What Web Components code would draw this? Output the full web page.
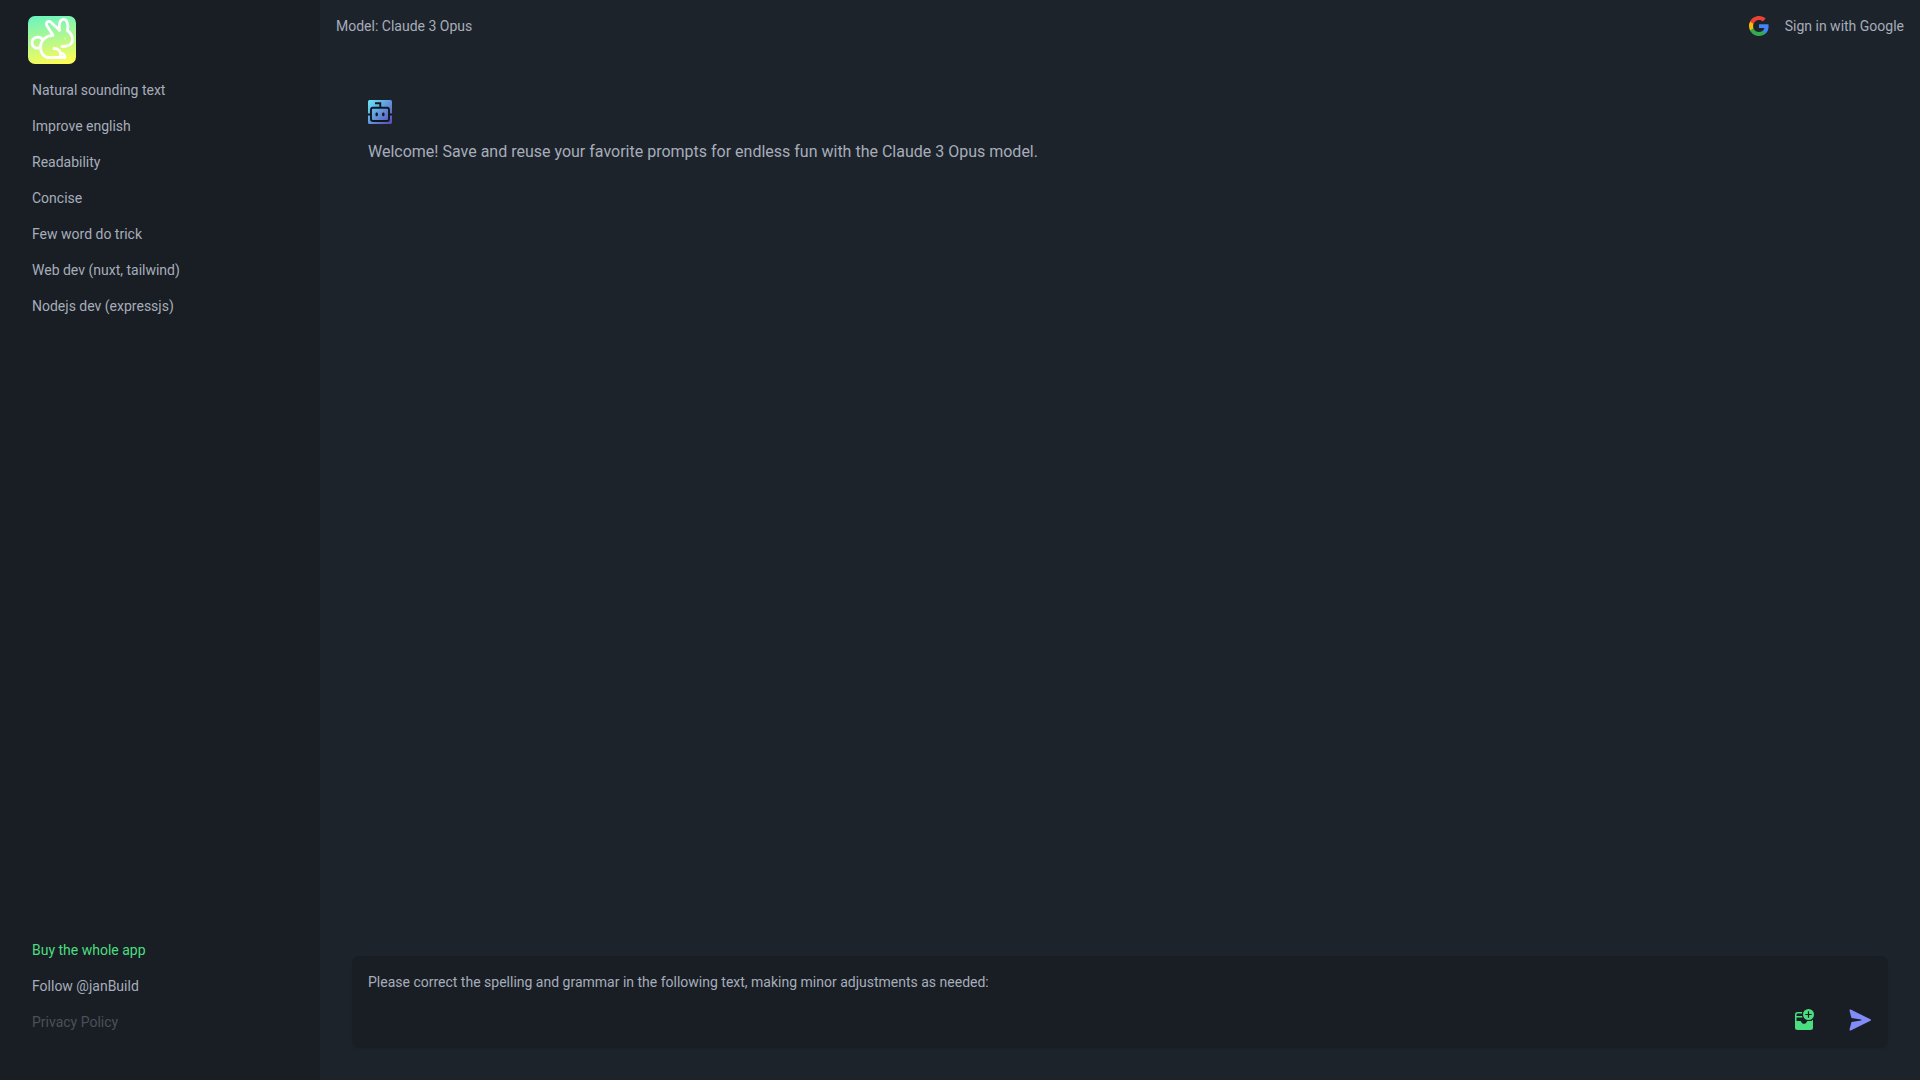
<!DOCTYPE html>
<html lang="en">
<head>
<meta charset="utf-8">
<meta name="viewport" content="width=device-width, initial-scale=1">
<title>Claude 3 Opus prompts</title>
<style>
  :root {
    --base-100: #1d232a;
    --base-200: #191e24;
    --content: #a6adbb;
    --muted: #4b5058;
    --green: #4ade80;
    --indigo: #818cf8;
  }
  body {
    margin: 0;
    background: var(--base-100);
    color: var(--content);
    font: 14px/20px Roboto, "Liberation Sans", sans-serif;
  }
</style>
</head>
<body>
<prompt-app>
  <side-bar slot="sidebar">
    <menu-item>Natural sounding text</menu-item>
    <menu-item>Improve english</menu-item>
    <menu-item>Readability</menu-item>
    <menu-item>Concise</menu-item>
    <menu-item>Few word do trick</menu-item>
    <menu-item>Web dev (nuxt, tailwind)</menu-item>
    <menu-item>Nodejs dev (expressjs)</menu-item>
    <menu-item slot="footer" href="#buy" tone="accent">Buy the whole app</menu-item>
    <menu-item slot="footer" href="#follow">Follow @janBuild</menu-item>
    <menu-item slot="footer" href="#privacy" tone="muted">Privacy Policy</menu-item>
  </side-bar>
  <top-bar>Model: Claude 3 Opus</top-bar>
  <chat-message>Welcome! Save and reuse your favorite prompts for endless fun with the Claude 3 Opus model.</chat-message>
  <prompt-box slot="composer" value="Please correct the spelling and grammar in the following text, making minor adjustments as needed:"></prompt-box>
</prompt-app>

<script>
class PromptApp extends HTMLElement {
  constructor() {
    super();
    this.attachShadow({ mode: "open" });
  }

  connectedCallback() {
    this.shadowRoot.innerHTML = `
      <style>
        :host {
          display: grid;
          grid-template-columns: 320px minmax(0, 1fr);
          min-height: 100vh;
        }
        main {
          display: flex;
          flex-direction: column;
        }
        .messages {
          flex: 1;
        }
        .composer {
          padding: 0 32px 32px;
        }
      </style>
      <slot name="sidebar"></slot>
      <main>
        <div class="messages"><slot></slot></div>
        <div class="composer"><slot name="composer"></slot></div>
      </main>
    `;
  }
}

class SideBar extends HTMLElement {
  constructor() {
    super();
    this.attachShadow({ mode: "open" });
  }

  connectedCallback() {
    this.shadowRoot.innerHTML = `
      <style>
        :host {
          display: flex;
          flex-direction: column;
          justify-content: space-between;
          box-sizing: border-box;
          padding: 16px 16px 40px;
          background: var(--base-200);
        }
        .logo {
          display: block;
          width: 48px;
          height: 48px;
          margin: 0 12px 8px;
        }
        svg {
          display: block;
        }
      </style>
      <nav aria-label="Prompts">
        <a class="logo" href="#home" aria-label="Home">
          <svg width="48" height="48" viewBox="0 0 48 48" fill="none">
            <defs>
              <linearGradient id="sky" x1="20" y1="0" x2="28" y2="48" gradientUnits="userSpaceOnUse">
                <stop stop-color="#70f5bb"/>
                <stop offset=".5" stop-color="#b5f88d"/>
                <stop offset="1" stop-color="#fcfc55"/>
              </linearGradient>
            </defs>
            <rect width="48" height="48" rx="7" fill="url(#sky)"/>
            <g stroke="#fff" stroke-width="2.8" stroke-linecap="round" stroke-linejoin="round">
              <path d="M12.500 31.300C8.500 33.500 4 31 4 26.800c0-5.800 8.200-7.800 10.800-2.600"/>
              <path d="M31.500 14.300 23 6.300c-2.500-2.300-5.500.2-4.200 3.200L25 19.300c-7 .2-12.500 5.200-12.500 12.200 0 5.500 3.500 10 8.500 10h16c0-2.500-2-4.300-4.800-4.300"/>
              <path d="M31.500 14.300C30.500 8 32 3.300 35.500 3.300S40.800 8.500 39.500 14.500c3 2.200 5 5.500 5 9.300 0 4.200-4 6.700-10.500 6.700"/>
              <path d="M26 32.500c3.800 0 6.500 2.200 6.500 5.200v3.600"/>
            </g>
            <circle cx="37" cy="22.500" r="1" fill="#dffb9d"/>
          </svg>
        </a>
        <slot></slot>
      </nav>
      <footer><slot name="footer"></slot></footer>
    `;
  }
}

class MenuItem extends HTMLElement {
  constructor() {
    super();
    this.attachShadow({ mode: "open" });
  }

  connectedCallback() {
    const href = this.getAttribute("href");
    const open = href ? `<a class="item" href="${href}">` : `<button class="item" type="button">`;
    const close = href ? "</a>" : "</button>";
    this.shadowRoot.innerHTML = `
      <style>
        :host {
          display: block;
        }
        .item {
          display: block;
          box-sizing: border-box;
          width: 100%;
          padding: 8px 16px;
          border: 0;
          border-radius: 8px;
          background: none;
          color: inherit;
          font: inherit;
          text-align: left;
          text-decoration: none;
          cursor: pointer;
        }
        .item:hover {
          background: var(--base-100);
        }
        :host([tone="accent"]) .item {
          color: var(--green);
        }
        :host([tone="muted"]) .item {
          color: var(--muted);
        }
      </style>
      ${open}<slot></slot>${close}
    `;
  }
}

class TopBar extends HTMLElement {
  constructor() {
    super();
    this.attachShadow({ mode: "open" });
  }

  connectedCallback() {
    this.shadowRoot.innerHTML = `
      <style>
        :host {
          display: flex;
          align-items: center;
          justify-content: space-between;
          padding: 16px;
        }
        button {
          display: flex;
          align-items: center;
          gap: 16px;
          padding: 0;
          border: 0;
          background: none;
          color: inherit;
          font: inherit;
          cursor: pointer;
        }
      </style>
      <span><slot></slot></span>
      <button type="button">
        <svg width="20" height="20" viewBox="2 2 44 44" aria-hidden="true">
          <path fill="#4285f4" d="M45.120 24.500c0-1.560-.14-3.060-.4-4.500H24v8.510h11.840c-.51 2.750-2.060 5.080-4.390 6.640v5.520h7.110c4.160-3.830 6.560-9.470 6.560-16.170z"/>
          <path fill="#34a853" d="M24 46c5.940 0 10.920-1.970 14.560-5.330l-7.110-5.520c-1.970 1.320-4.490 2.100-7.450 2.100-5.730 0-10.580-3.870-12.310-9.070H4.340v5.700C7.960 41.070 15.400 46 24 46z"/>
          <path fill="#fbbc05" d="M11.690 28.180C11.250 26.860 11 25.450 11 24s.25-2.860.69-4.180v-5.700H4.340A21.990 21.990 0 0 0 2 24c0 3.550.85 6.910 2.340 9.880l7.350-5.700z"/>
          <path fill="#ea4335" d="M24 10.750c3.230 0 6.130 1.110 8.410 3.290l6.310-6.310C34.910 4.180 29.930 2 24 2 15.400 2 7.960 6.930 4.340 14.120l7.350 5.700c1.730-5.200 6.580-9.070 12.310-9.070z"/>
        </svg>
        Sign in with Google
      </button>
    `;
  }
}

class ChatMessage extends HTMLElement {
  constructor() {
    super();
    this.attachShadow({ mode: "open" });
  }

  connectedCallback() {
    this.shadowRoot.innerHTML = `
      <style>
        :host {
          display: block;
          padding: 48px;
        }
        svg {
          display: block;
        }
        p {
          margin: 16px 0 0;
          font-size: 16px;
          line-height: 24px;
        }
      </style>
      <svg width="24" height="24" viewBox="0 0 24 24" fill="none" aria-hidden="true">
        <defs>
          <linearGradient id="bot" x1="0" y1="0" x2="24" y2="24" gradientUnits="userSpaceOnUse">
            <stop stop-color="#67e8f9"/>
            <stop offset=".5" stop-color="#6296dc"/>
            <stop offset="1" stop-color="#5b48b5"/>
          </linearGradient>
        </defs>
        <rect width="24" height="24" rx="1.500" fill="url(#bot)"/>
        <g stroke="#111820" stroke-width="1.900">
          <rect x="3" y="7.800" width="18" height="13.200" rx="2"/>
          <path d="M12.300 7.500V3.200H7M0 14.500h3M21 14.500h3"/>
          <path stroke-width="2.400" stroke-linecap="round" d="M8.700 13.700v1.300M15.300 13.700v1.300"/>
        </g>
      </svg>
      <p><slot></slot></p>
    `;
  }
}

class PromptBox extends HTMLElement {
  constructor() {
    super();
    this.attachShadow({ mode: "open" });
  }

  connectedCallback() {
    this.render();
    const textarea = this.shadowRoot.querySelector("textarea");
    textarea.value = this.getAttribute("value") || "";
    this.shadowRoot.querySelector("form").addEventListener("submit", (event) => {
      event.preventDefault();
      this.dispatchEvent(
        new CustomEvent("send-prompt", {
          detail: { prompt: textarea.value.trim() },
          bubbles: true,
          composed: true,
        }),
      );
    });
  }

  render() {
    this.shadowRoot.innerHTML = `
      <style>
        :host {
          display: block;
        }
        form {
          border-radius: 8px;
          background: var(--base-200);
          box-shadow: 0 1px 2px rgba(0, 0, 0, 0.05);
        }
        textarea {
          display: block;
          box-sizing: border-box;
          width: 100%;
          height: 36px;
          padding: 16px 16px 0;
          border: 0;
          outline: 0;
          resize: none;
          overflow: hidden;
          background: none;
          color: inherit;
          font: inherit;
        }
        .actions {
          display: flex;
          justify-content: flex-end;
        }
        button {
          padding: 16px;
          border: 0;
          background: none;
          color: var(--green);
          cursor: pointer;
        }
        .send {
          color: var(--indigo);
        }
        svg {
          display: block;
        }
      </style>
      <form>
        <textarea aria-label="Prompt"></textarea>
        <div class="actions">
          <button type="button" aria-label="Save prompt">
            <svg width="24" height="24" viewBox="0 0 24 24" fill="currentColor">
              <path d="M3 13h5c.8 0 1 .4 1.300 1 .4.900 1.200 1.800 2.700 1.800s2.300-.9 2.700-1.800c.3-.6.500-1 1.300-1h5v6.500a2.500 2.500 0 0 1-2.500 2.500h-13A2.500 2.500 0 0 1 3 19.500z"/>
              <path d="M3 13V6.500A2.500 2.500 0 0 1 5.500 4h4.700l-.2 1.500H6c-1 0-1.500.5-1.500 1.500v1H10l.6 1.500H4.500V13zM19.500 12.700l1.500-1v2.300h-1.500z"/>
              <circle cx="16.500" cy="6.500" r="5.500"/>
              <path d="M16.500 3.300v6.400M13.300 6.500h6.400" stroke="#191e24" stroke-width="1.200"/>
            </svg>
          </button>
          <button class="send" type="submit" aria-label="Send">
            <svg width="24" height="24" viewBox="0 0 24 24" fill="currentColor">
              <path d="M1.500 2.600c-.2-.8.500-1.300 1.200-1l19.800 9.700c.6.300.6 1.100 0 1.400l-19.800 9.700c-.7.300-1.400-.2-1.200-1l2-7.500 9.500-1.400c.7-.1.700-.9 0-1l-9.500-1.400z"/>
            </svg>
          </button>
        </div>
      </form>
    `;
  }
}

customElements.define("prompt-app", PromptApp);
customElements.define("side-bar", SideBar);
customElements.define("menu-item", MenuItem);
customElements.define("top-bar", TopBar);
customElements.define("chat-message", ChatMessage);
customElements.define("prompt-box", PromptBox);
</script>
</body>
</html>
